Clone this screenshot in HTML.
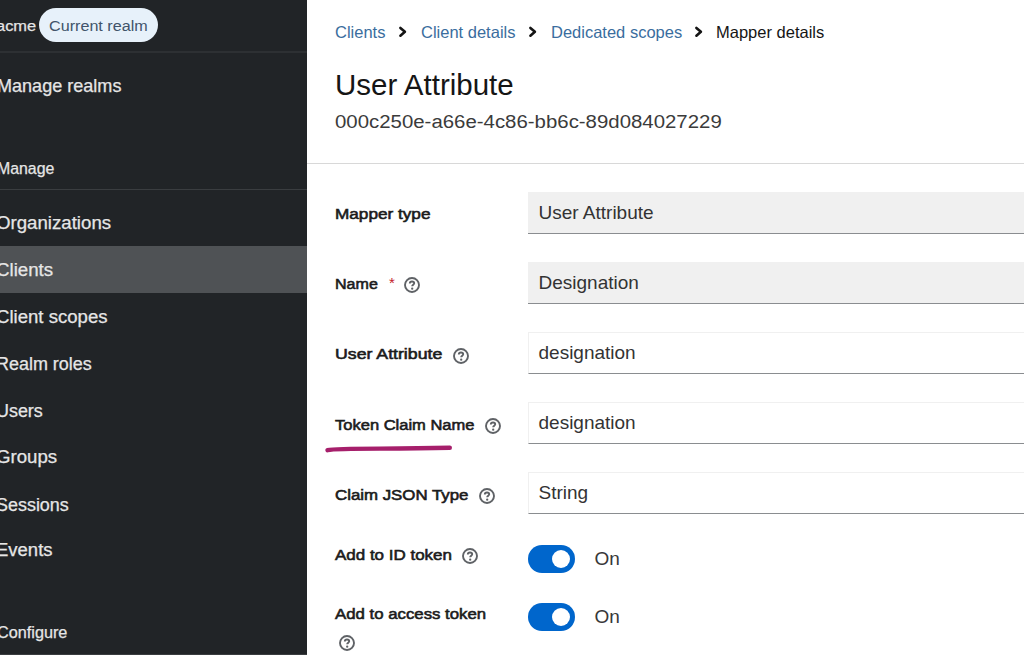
<!DOCTYPE html>
<html><head><meta charset="utf-8"><style>
html,body{margin:0;padding:0;width:1024px;height:655px;overflow:hidden;background:#fff}
body{position:relative;font-family:'Liberation Sans', sans-serif}
.t{position:absolute;white-space:nowrap;line-height:1}
.r{position:absolute;box-sizing:border-box}
</style></head><body>
<div class="r" style="left:0px;top:0px;width:307px;height:655px;background:#212427"></div>
<div class="r" style="left:0px;top:51px;width:307px;height:2px;background:#2d3033"></div>
<div class="r" style="left:0px;top:189px;width:307px;height:1px;background:#3a3d40"></div>
<div class="r" style="left:0px;top:654px;width:307px;height:1px;background:#3a3d40"></div>
<div class="r" style="left:0px;top:246px;width:307px;height:47px;background:#4f5255"></div>
<div class="t" style="left:-4.5px;top:18.3px;font-size:15.5px;color:#e6e6e6;font-weight:normal;letter-spacing:0px;transform:scaleX(1.0600);transform-origin:0 0;-webkit-text-stroke:0.25px #e6e6e6;">acme</div>
<div class="r" style="left:39px;top:8px;width:119px;height:34px;background:#e7f1fa;border-radius:17px"></div>
<div class="t" style="left:49.2px;top:17.7px;font-size:15.5px;color:#41546a;font-weight:normal;letter-spacing:0px;transform:scaleX(1.0420);transform-origin:0 0;">Current realm</div>
<div class="t" style="left:-3.5px;top:77.5px;font-size:17.8px;color:#e6e6e6;font-weight:normal;letter-spacing:0px;transform:scaleX(1.0154);transform-origin:0 0;-webkit-text-stroke:0.25px #e6e6e6;">Manage realms</div>
<div class="t" style="left:-3px;top:160.9px;font-size:16px;color:#e6e6e6;font-weight:normal;letter-spacing:0px;transform:scaleX(0.9914);transform-origin:0 0;-webkit-text-stroke:0.25px #e6e6e6;">Manage</div>
<div class="t" style="left:-4.5px;top:215.3px;font-size:17.5px;color:#e6e6e6;font-weight:normal;letter-spacing:0px;transform:scaleX(1.0659);transform-origin:0 0;-webkit-text-stroke:0.25px #e6e6e6;">Organizations</div>
<div class="t" style="left:-4.5px;top:262.0px;font-size:17.5px;color:#e6e6e6;font-weight:normal;letter-spacing:0px;transform:scaleX(1.0673);transform-origin:0 0;-webkit-text-stroke:0.25px #e6e6e6;">Clients</div>
<div class="t" style="left:-4.5px;top:308.7px;font-size:17.5px;color:#e6e6e6;font-weight:normal;letter-spacing:0px;transform:scaleX(1.0613);transform-origin:0 0;-webkit-text-stroke:0.25px #e6e6e6;">Client scopes</div>
<div class="t" style="left:-4.5px;top:355.9px;font-size:17.5px;color:#e6e6e6;font-weight:normal;letter-spacing:0px;transform:scaleX(1.0260);transform-origin:0 0;-webkit-text-stroke:0.25px #e6e6e6;">Realm roles</div>
<div class="t" style="left:-4.5px;top:402.6px;font-size:17.5px;color:#e6e6e6;font-weight:normal;letter-spacing:0px;transform:scaleX(1.0240);transform-origin:0 0;-webkit-text-stroke:0.25px #e6e6e6;">Users</div>
<div class="t" style="left:-4.5px;top:449.3px;font-size:17.5px;color:#e6e6e6;font-weight:normal;letter-spacing:0px;transform:scaleX(1.0664);transform-origin:0 0;-webkit-text-stroke:0.25px #e6e6e6;">Groups</div>
<div class="t" style="left:-4.5px;top:496.5px;font-size:17.5px;color:#e6e6e6;font-weight:normal;letter-spacing:0px;transform:scaleX(1.0251);transform-origin:0 0;-webkit-text-stroke:0.25px #e6e6e6;">Sessions</div>
<div class="t" style="left:-4.5px;top:542.4px;font-size:17.5px;color:#e6e6e6;font-weight:normal;letter-spacing:0px;transform:scaleX(1.0561);transform-origin:0 0;-webkit-text-stroke:0.25px #e6e6e6;">Events</div>
<div class="t" style="left:-3px;top:625.4px;font-size:16px;color:#e6e6e6;font-weight:normal;letter-spacing:0px;transform:scaleX(1.0144);transform-origin:0 0;-webkit-text-stroke:0.25px #e6e6e6;">Configure</div>
<div class="r" style="left:307px;top:0px;width:717px;height:655px;background:#ffffff"></div>
<div class="r" style="left:307px;top:163px;width:717px;height:1px;background:#d8d8d8"></div>
<div class="t" style="left:335px;top:24.0px;font-size:16.5px;color:#3a6d9e;font-weight:normal;letter-spacing:0px;">Clients</div>
<div class="t" style="left:421px;top:24.0px;font-size:16.5px;color:#3a6d9e;font-weight:normal;letter-spacing:0px;">Client details</div>
<div class="t" style="left:551px;top:24.0px;font-size:16.5px;color:#3a6d9e;font-weight:normal;letter-spacing:0px;">Dedicated scopes</div>
<div class="t" style="left:716px;top:24.0px;font-size:16.5px;color:#151515;font-weight:normal;letter-spacing:0px;">Mapper details</div>
<svg class="r" style="left:397.9px;top:25px" width="12" height="14" viewBox="0 0 12 14"><path d="M2.4 2.9 L6.9 6.8 L2.4 10.7" fill="none" stroke="#151515" stroke-width="2.6" stroke-linecap="round" stroke-linejoin="round"/></svg>
<svg class="r" style="left:528.3px;top:25px" width="12" height="14" viewBox="0 0 12 14"><path d="M2.4 2.9 L6.9 6.8 L2.4 10.7" fill="none" stroke="#151515" stroke-width="2.6" stroke-linecap="round" stroke-linejoin="round"/></svg>
<svg class="r" style="left:694px;top:25px" width="12" height="14" viewBox="0 0 12 14"><path d="M2.4 2.9 L6.9 6.8 L2.4 10.7" fill="none" stroke="#151515" stroke-width="2.6" stroke-linecap="round" stroke-linejoin="round"/></svg>
<div class="t" style="left:335px;top:70.1px;font-size:29.5px;color:#151515;font-weight:normal;letter-spacing:0px;">User Attribute</div>
<div class="t" style="left:335px;top:112.5px;font-size:18px;color:#3b3b3b;font-weight:normal;letter-spacing:0px;transform:scaleX(1.1332);transform-origin:0 0;">000c250e-a66e-4c86-bb6c-89d084027229</div>
<div class="t" style="left:335.3px;top:205.6px;font-size:15.5px;color:#1b1b1b;font-weight:normal;letter-spacing:0px;transform:scaleX(1.1080);transform-origin:0 0;-webkit-text-stroke:0.6px #1b1b1b;">Mapper type</div>
<div class="t" style="left:335.3px;top:275.6px;font-size:15.5px;color:#1b1b1b;font-weight:normal;letter-spacing:0px;transform:scaleX(1.0352);transform-origin:0 0;-webkit-text-stroke:0.6px #1b1b1b;">Name</div>
<div class="t" style="left:335.3px;top:345.7px;font-size:15.5px;color:#1b1b1b;font-weight:normal;letter-spacing:0px;transform:scaleX(1.1424);transform-origin:0 0;-webkit-text-stroke:0.6px #1b1b1b;">User Attribute</div>
<div class="t" style="left:335.3px;top:417.0px;font-size:15.5px;color:#1b1b1b;font-weight:normal;letter-spacing:0px;transform:scaleX(1.0654);transform-origin:0 0;-webkit-text-stroke:0.6px #1b1b1b;">Token Claim Name</div>
<div class="t" style="left:335.3px;top:486.6px;font-size:15.5px;color:#1b1b1b;font-weight:normal;letter-spacing:0px;transform:scaleX(1.0855);transform-origin:0 0;-webkit-text-stroke:0.6px #1b1b1b;">Claim JSON Type</div>
<div class="t" style="left:335.3px;top:547.4px;font-size:15.5px;color:#1b1b1b;font-weight:normal;letter-spacing:0px;transform:scaleX(1.0944);transform-origin:0 0;-webkit-text-stroke:0.6px #1b1b1b;">Add to ID token</div>
<div class="t" style="left:335.3px;top:605.9px;font-size:15.5px;color:#1b1b1b;font-weight:normal;letter-spacing:0px;transform:scaleX(1.0827);transform-origin:0 0;-webkit-text-stroke:0.6px #1b1b1b;">Add to access token</div>
<div class="t" style="left:389px;top:275.2px;font-size:15px;color:#c4202a;font-weight:normal;letter-spacing:0px;">*</div>
<svg class="r" style="left:403.1px;top:276.3px" width="18" height="18" viewBox="0 0 18 18"><circle cx="9" cy="9" r="7" fill="none" stroke="#5f6266" stroke-width="1.9"/><path d="M6.8 7.5 C6.8 6.1 7.9 5.5 9 5.5 C10.2 5.5 11.2 6.2 11.2 7.3 C11.2 8.6 9.2 8.8 9.2 10.2" fill="none" stroke="#5f6266" stroke-width="1.9"/><circle cx="9.2" cy="12.7" r="1.15" fill="#5f6266"/></svg>
<svg class="r" style="left:452px;top:347px" width="18" height="18" viewBox="0 0 18 18"><circle cx="9" cy="9" r="7" fill="none" stroke="#5f6266" stroke-width="1.9"/><path d="M6.8 7.5 C6.8 6.1 7.9 5.5 9 5.5 C10.2 5.5 11.2 6.2 11.2 7.3 C11.2 8.6 9.2 8.8 9.2 10.2" fill="none" stroke="#5f6266" stroke-width="1.9"/><circle cx="9.2" cy="12.7" r="1.15" fill="#5f6266"/></svg>
<svg class="r" style="left:483.5px;top:416.6px" width="18" height="18" viewBox="0 0 18 18"><circle cx="9" cy="9" r="7" fill="none" stroke="#5f6266" stroke-width="1.9"/><path d="M6.8 7.5 C6.8 6.1 7.9 5.5 9 5.5 C10.2 5.5 11.2 6.2 11.2 7.3 C11.2 8.6 9.2 8.8 9.2 10.2" fill="none" stroke="#5f6266" stroke-width="1.9"/><circle cx="9.2" cy="12.7" r="1.15" fill="#5f6266"/></svg>
<svg class="r" style="left:477.7px;top:487.3px" width="18" height="18" viewBox="0 0 18 18"><circle cx="9" cy="9" r="7" fill="none" stroke="#5f6266" stroke-width="1.9"/><path d="M6.8 7.5 C6.8 6.1 7.9 5.5 9 5.5 C10.2 5.5 11.2 6.2 11.2 7.3 C11.2 8.6 9.2 8.8 9.2 10.2" fill="none" stroke="#5f6266" stroke-width="1.9"/><circle cx="9.2" cy="12.7" r="1.15" fill="#5f6266"/></svg>
<svg class="r" style="left:461.4px;top:546.6px" width="18" height="18" viewBox="0 0 18 18"><circle cx="9" cy="9" r="7" fill="none" stroke="#5f6266" stroke-width="1.9"/><path d="M6.8 7.5 C6.8 6.1 7.9 5.5 9 5.5 C10.2 5.5 11.2 6.2 11.2 7.3 C11.2 8.6 9.2 8.8 9.2 10.2" fill="none" stroke="#5f6266" stroke-width="1.9"/><circle cx="9.2" cy="12.7" r="1.15" fill="#5f6266"/></svg>
<svg class="r" style="left:338.3px;top:633.8px" width="18" height="18" viewBox="0 0 18 18"><circle cx="9" cy="9" r="7" fill="none" stroke="#5f6266" stroke-width="1.9"/><path d="M6.8 7.5 C6.8 6.1 7.9 5.5 9 5.5 C10.2 5.5 11.2 6.2 11.2 7.3 C11.2 8.6 9.2 8.8 9.2 10.2" fill="none" stroke="#5f6266" stroke-width="1.9"/><circle cx="9.2" cy="12.7" r="1.15" fill="#5f6266"/></svg>
<div class="r" style="left:528px;top:192px;width:520px;height:42px;background:#f0f0f0;border-bottom:1px solid #8a8d90;box-sizing:border-box"></div>
<div class="t" style="left:538.5px;top:202.8px;font-size:19px;color:#333333;font-weight:normal;letter-spacing:0px;">User Attribute</div>
<div class="r" style="left:528px;top:262px;width:520px;height:42px;background:#f0f0f0;border-bottom:1px solid #8a8d90;box-sizing:border-box"></div>
<div class="t" style="left:538.5px;top:272.9px;font-size:19px;color:#333333;font-weight:normal;letter-spacing:0px;">Designation</div>
<div class="r" style="left:528px;top:332px;width:520px;height:42px;background:#fff;border:1px solid #f0f0f0;border-bottom:1px solid #8a8d90;box-sizing:border-box"></div>
<div class="t" style="left:538.5px;top:342.9px;font-size:19px;color:#333333;font-weight:normal;letter-spacing:0px;">designation</div>
<div class="r" style="left:528px;top:402px;width:520px;height:42px;background:#fff;border:1px solid #f0f0f0;border-bottom:1px solid #8a8d90;box-sizing:border-box"></div>
<div class="t" style="left:538.5px;top:412.9px;font-size:19px;color:#333333;font-weight:normal;letter-spacing:0px;">designation</div>
<div class="r" style="left:528px;top:472px;width:520px;height:42px;background:#fff;border:1px solid #f0f0f0;border-bottom:1px solid #8a8d90;box-sizing:border-box"></div>
<div class="t" style="left:538.5px;top:482.9px;font-size:19px;color:#333333;font-weight:normal;letter-spacing:0px;">String</div>
<div class="r" style="left:528px;top:544.5px;width:47px;height:28px;background:#0066cc;border-radius:14px"></div>
<div class="r" style="left:552px;top:549.5px;width:18px;height:18px;background:#fff;border-radius:50%"></div>
<div class="r" style="left:528px;top:602.5px;width:47px;height:28px;background:#0066cc;border-radius:14px"></div>
<div class="r" style="left:552px;top:607.5px;width:18px;height:18px;background:#fff;border-radius:50%"></div>
<div class="t" style="left:594.5px;top:548.5px;font-size:19px;color:#383838;font-weight:normal;letter-spacing:0px;">On</div>
<div class="t" style="left:594.5px;top:606.6px;font-size:19px;color:#383838;font-weight:normal;letter-spacing:0px;">On</div>
<svg class="r" style="left:320px;top:440px" width="140" height="16" viewBox="0 0 140 16"><path d="M7.5 10.2 C13 8.8 30 8.6 60 8.6 C90 8.6 115 8.2 129.8 7.8" fill="none" stroke="#a61f6b" stroke-width="4.4" stroke-linecap="round"/></svg>
</body></html>
